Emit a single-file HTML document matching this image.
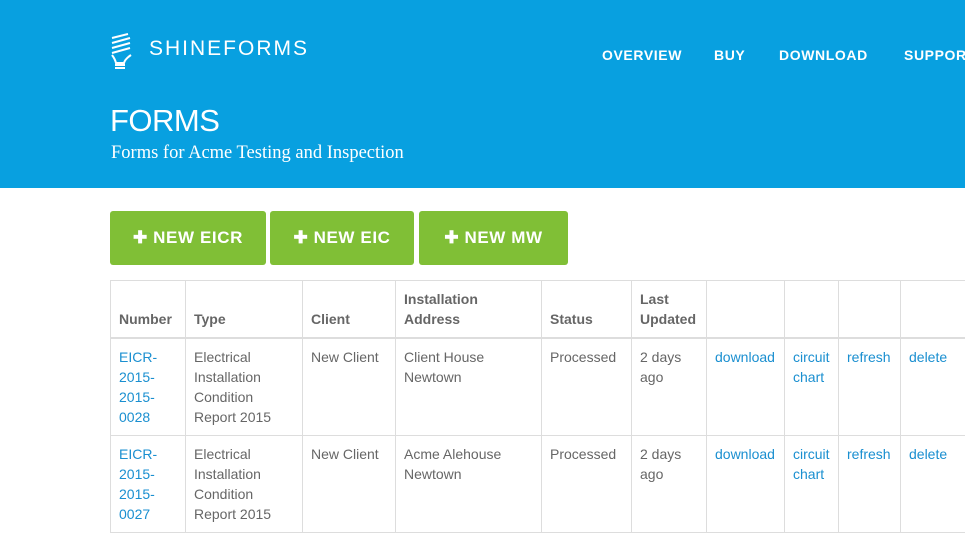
<!DOCTYPE html>
<html><head><style>
*{margin:0;padding:0;box-sizing:border-box}
body{width:965px;height:531px;overflow:hidden;background:#fff;font-family:"Liberation Sans",sans-serif;position:relative}
.hdr{position:absolute;left:0;top:0;width:965px;height:188px;background:#08a0e0}
.logo{position:absolute;left:149px;top:37px;color:#fff;font-size:21px;letter-spacing:2px;font-weight:normal}
.nav{position:absolute;top:47px;color:#fff;font-weight:bold;font-size:14px;letter-spacing:.6px;white-space:nowrap}
.h1{position:absolute;left:110px;top:103px;color:#fff;font-size:31px;letter-spacing:-0.5px}
.sub{position:absolute;left:111px;top:143px;color:#fff;font-family:"Liberation Serif",serif;font-size:18.5px}
.btn{position:absolute;top:211px;height:54px;background:#80bf36;border-radius:3px;color:#fff;font-weight:bold;font-size:17px;letter-spacing:.6px;text-align:center;line-height:54px}
table{position:absolute;left:110px;top:280px;border-collapse:collapse;table-layout:fixed;width:920px;font-size:14px;line-height:20px}
td,th{border:1px solid #ddd;padding:8px 8px 8px 8px;vertical-align:top;text-align:left;color:#666;font-weight:normal}
th{vertical-align:bottom;font-weight:bold;color:#666;height:57px;border-bottom:2px solid #ddd}
td{height:97px}
a{color:#1a8fd0;text-decoration:none}
</style></head><body>
<div class="hdr"></div>
<svg style="position:absolute;left:109px;top:33px" width="26" height="38" viewBox="0 0 26 38" fill="none" stroke="#fff" stroke-width="2">
<path d="M3 5 L19 1 M3 10 L21 5 M3 15 L21 10 M3 20 L21 15"/>
<path d="M3 22 Q6 26 7 30 L15 30 Q16 26 22 22" />
<path d="M6 32 L16 32 M6 35 L16 35"/>
</svg>
<div class="logo">SHINEFORMS</div>
<div class="nav" style="left:602px">OVERVIEW</div>
<div class="nav" style="left:714px">BUY</div>
<div class="nav" style="left:779px">DOWNLOAD</div>
<div class="nav" style="left:904px">SUPPORT</div>
<div class="h1">FORMS</div>
<div class="sub">Forms for Acme Testing and Inspection</div>
<div class="btn" style="left:110px;width:156px">✚ NEW EICR</div>
<div class="btn" style="left:270px;width:144px">✚ NEW EIC</div>
<div class="btn" style="left:419px;width:149px">✚ NEW MW</div>
<table>
<colgroup><col style="width:75px"><col style="width:117px"><col style="width:93px"><col style="width:146px"><col style="width:90px"><col style="width:75px"><col style="width:78px"><col style="width:54px"><col style="width:62px"><col style="width:130px"></colgroup>
<tr><th>Number</th><th>Type</th><th>Client</th><th>Installation Address</th><th>Status</th><th>Last Updated</th><th></th><th></th><th></th><th></th></tr>
<tr><td><a>EICR-2015-2015-0028</a></td><td>Electrical Installation Condition Report 2015</td><td>New Client</td><td>Client House Newtown</td><td>Processed</td><td>2 days ago</td><td><a>download</a></td><td><a>circuit chart</a></td><td><a>refresh</a></td><td><a>delete</a></td></tr>
<tr><td><a>EICR-2015-2015-0027</a></td><td>Electrical Installation Condition Report 2015</td><td>New Client</td><td>Acme Alehouse Newtown</td><td>Processed</td><td>2 days ago</td><td><a>download</a></td><td><a>circuit chart</a></td><td><a>refresh</a></td><td><a>delete</a></td></tr>
</table>
</body></html>
